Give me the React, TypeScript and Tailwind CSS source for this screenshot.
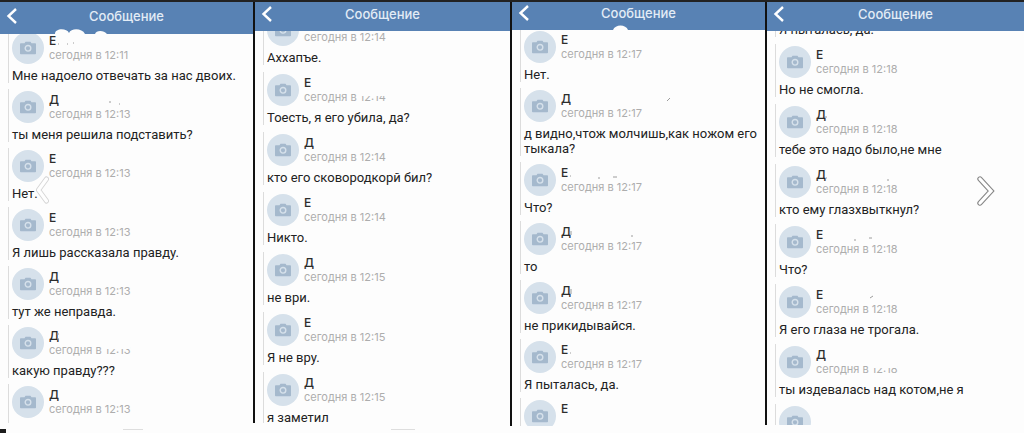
import { clsx } from 'clsx';

type Message = {
  name?: string;
  time?: string;
  text?: string;
  // only the text is visible, the top is scrolled away
  textOnly?: boolean;
  // time label is half rubbed out
  rubbed?: boolean;
  // leftovers of the erased surname
  marks?: string;
};

type Panel = {
  header: string;
  list: string;
  body: string;
  scribble?: string;
  messages: Message[];
};

const panels: Panel[] = [
  {
    header: 'h-8 pb-1',
    list: '-mt-1 gap-1.5',
    body: 'mb-1.5',
    scribble: 'M55 8c0-6 12-6 14-1c2-5 13-5 16 1zM95 8c1-4 9-4 12 0z',
    messages: [
      { name: 'Е', time: '12:11', text: 'Мне надоело отвечать за нас двоих.', marks: 'M9 10h1M18 10h1M24 9h1' },
      { name: 'Д', time: '12:13', text: 'ты меня решила подставить?', marks: 'M60 9h2M70 11h1' },
      { name: 'Е', time: '12:13', text: 'Нет.' },
      { name: 'Е', time: '12:13', text: 'Я лишь рассказала правду.' },
      { name: 'Д', time: '12:13', text: 'тут же неправда.' },
      { name: 'Д', time: '12:13', text: 'какую правду???', rubbed: true, marks: 'M9 4v2M9 9v2' },
      { name: 'Д', time: '12:13' },
    ],
  },
  {
    header: 'h-[29px] pb-1.5',
    list: '-mt-[19px] gap-[7px]',
    body: 'mb-1.5',
    messages: [
      { time: '12:14', text: 'Аххапъе.' },
      { name: 'Е', time: '12:14', text: 'Тоесть, я его убила, да?', rubbed: true },
      { name: 'Д', time: '12:14', text: 'кто его сковородкорй бил?' },
      { name: 'Е', time: '12:14', text: 'Никто.' },
      { name: 'Д', time: '12:15', text: 'не ври.' },
      { name: 'Е', time: '12:15', text: 'Я не вру.' },
      { name: 'Д', time: '12:15', text: 'я заметил' },
    ],
  },
  {
    header: 'h-7 pb-1.5',
    list: '-mt-px gap-1.5',
    body: 'mb-[3px]',
    scribble: 'M101 8c2-6 13-6 15 0z',
    messages: [
      { name: 'Е', time: '12:17', text: 'Нет.' },
      { name: 'Д', time: '12:17', text: 'д видно,чтож молчишь,как ножом его тыкала?', marks: 'M106 9l3-3' },
      { name: 'Е', time: '12:17', text: 'Что?', marks: 'M9 10h1M37 12h2M52 11h4' },
      { name: 'Д', time: '12:17', text: 'то', marks: 'M10 6v4M70 11h2' },
      { name: 'Д', time: '12:17', text: 'не прикидывайся.', marks: 'M10 5v5' },
      { name: 'Е', time: '12:17', text: 'Я пыталась, да.', marks: 'M9 10h1' },
      { name: 'Е' },
    ],
  },
  {
    header: 'h-[29px] pb-1.5',
    list: '-mt-[13px] gap-[7px]',
    body: 'mb-1',
    messages: [
      { text: 'Я пыталась, да.', textOnly: true },
      { name: 'Е', time: '12:18', text: 'Но не смогла.' },
      { name: 'Д', time: '12:18', text: 'тебе это надо было,не мне', marks: 'M10 8v2' },
      { name: 'Д', time: '12:18', text: 'кто ему глазхвыткнул?', marks: 'M10 10h1M71 12h2' },
      { name: 'Е', time: '12:18', text: 'Что?', marks: 'M38 12h2M53 10h3' },
      { name: 'Е', time: '12:18', text: 'Я его глаза не трогала.', marks: 'M54 10l3-2' },
      { name: 'Д', time: '12:18', text: 'ты издевалась над котом,не я', rubbed: true },
      {},
    ],
  },
];

const Avatar = () => (
  <div className="flex size-8 shrink-0 items-center justify-center rounded-full bg-[#d6e1eb]">
    <svg className="h-3.5 w-4" viewBox="0 0 16 14" fill="none">
      <path d="M.8 2.2h3.7L5.5.8h5l1 1.4h3.7a.8.8 0 0 1 .8.8v9.4a.8.8 0 0 1-.8.8H.8a.8.8 0 0 1-.8-.8V3a.8.8 0 0 1 .8-.8z" fill="#a5b9cd" />
      <circle cx="8" cy="7.3" r="2.8" stroke="#d6e1eb" strokeWidth="1.4" />
    </svg>
  </div>
);

const MessageItem = ({ name, time, text, textOnly, rubbed, marks }: Message) => (
  <li className="border-l border-[#dcdcdc] pl-[3px]">
    {!textOnly && (
      <div className="flex items-center gap-[5px] pt-0.5">
        <Avatar />
        <div className="relative">
          <p className="h-3.5 text-xs leading-3.5 font-medium text-[#2d2d2d]">{name}</p>
          <p className="h-3.5 text-[11px] leading-3.5 text-[#adadad]">
            {time && `сегодня в ${time}`}
          </p>
          {rubbed && <span className="absolute right-0 bottom-2 h-1.5 w-7 bg-[#fdfdfd]" />}
          {marks && (
            <svg className="absolute top-0 left-0 h-3.5 w-28" viewBox="0 0 112 14" fill="none">
              <path d={marks} stroke="#9c9c9c" strokeWidth="1" />
            </svg>
          )}
        </div>
      </div>
    )}
    <p className="min-h-[19px] pt-1 font-[Roboto,'Liberation_Sans',sans-serif] text-[13px] leading-[15px] text-[#222]">
      {text}
    </p>
  </li>
);

const ChatPanel = ({ panel, first }: { panel: Panel; first: boolean }) => (
  <section className={clsx('flex min-h-0 min-w-0 flex-col', !first && 'border-l-2 border-[#111]', panel.body)}>
    <header className={clsx('relative z-10 flex shrink-0 items-center justify-center bg-[#5882b4]', panel.header)}>
      <button aria-label="Назад" className="absolute left-1.5">
        <svg className="h-4 w-3" viewBox="0 0 12 16" fill="none">
          <path d="M10 1L2.5 8l7.5 7" stroke="#fff" strokeWidth="2.4" />
        </svg>
      </button>
      <h2 className="text-[13px] leading-4 font-medium text-[#e3ecf6]">Сообщение</h2>
      {panel.scribble && (
        <svg className="absolute bottom-0 left-0 h-1.5 w-32" viewBox="0 2 128 6">
          <path d={panel.scribble} fill="#fdfdfd" />
        </svg>
      )}
    </header>
    <div className="min-h-0 flex-1 overflow-hidden">
      <ul className={clsx('flex flex-col pr-2 pl-2', panel.list)}>
        {panel.messages.map((message, index) => (
          <MessageItem key={index} {...message} />
        ))}
      </ul>
    </div>
  </section>
);

const App = () => {
  return (
    <main className="relative flex h-screen flex-col overflow-hidden bg-[#fdfdfd] font-[Inter,'Liberation_Sans',sans-serif]">
      <div className="h-0.5 shrink-0 bg-[#222]" />
      <div className="grid min-h-0 flex-1 grid-cols-[253fr_257fr_255fr_259fr] grid-rows-[minmax(0,1fr)]">
        {panels.map((panel, index) => (
          <ChatPanel key={index} panel={panel} first={index === 0} />
        ))}
      </div>
      <footer className="flex h-1 shrink-0 items-start">
        <div className="h-1 w-1.5 bg-[#1c1c1c]" />
        <div className="ml-[117px] h-px w-5 bg-[#dedede]" />
        <div className="ml-[248px] h-px w-6 bg-[#dedede]" />
      </footer>

      <button aria-label="Предыдущее" className="absolute top-44 left-[34px] opacity-50">
        <svg className="h-7 w-4" viewBox="0 0 16 28" fill="none" strokeLinecap="round" strokeLinejoin="round">
          <path d="M12.5 3L4.5 14l8 11" stroke="#aaa" strokeWidth="5" />
          <path d="M12.5 3L4.5 14l8 11" stroke="#fff" strokeWidth="3.4" />
        </svg>
      </button>
      <button aria-label="Следующее" className="absolute top-[175px] right-7">
        <svg className="h-8 w-5" viewBox="0 0 20 32" fill="none" strokeLinecap="round" strokeLinejoin="miter">
          <path d="M4 4L15 16L4 28" stroke="#888" strokeWidth="5.4" />
          <path d="M4 4L15 16L4 28" stroke="#fff" strokeWidth="3.2" />
        </svg>
      </button>
    </main>
  );
};

export default App;
